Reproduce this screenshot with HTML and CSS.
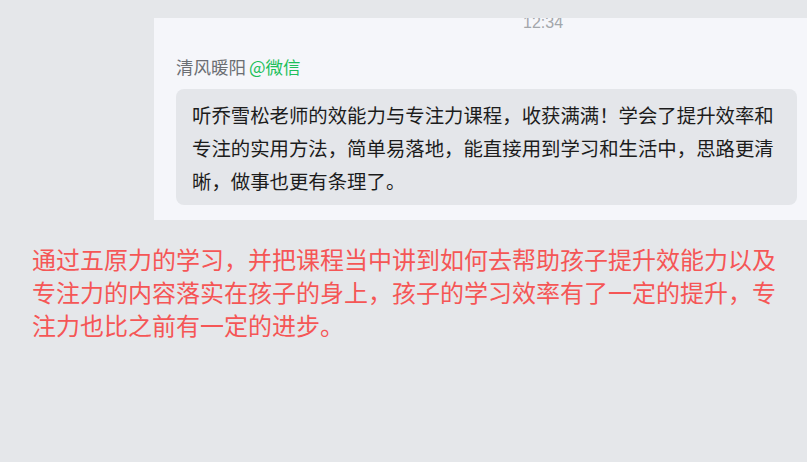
FILE: index.html
```html
<!DOCTYPE html>
<html lang="zh-CN">
<head>
<meta charset="utf-8">
<title>评价</title>
<link rel="stylesheet" href="styles.css">
</head>
<body>
<div class="page">
  <div class="card">
    <div class="time">12:34</div>
    <div class="name">清风暖阳<span class="src">@微信</span></div>
    <div class="bubble">听乔雪松老师的效能力与专注力课程，收获满满！学会了提升效率和专注的实用方法，简单易落地，能直接用到学习和生活中，思路更清晰，做事也更有条理了。</div>
  </div>
  <p class="note">通过五原力的学习，并把课程当中讲到如何去帮助孩子提升效能力以及专注力的内容落实在孩子的身上，孩子的学习效率有了一定的提升，专注力也比之前有一定的进步。</p>
</div>
</body>
</html>
```

FILE: styles.css
```css
html, body {
  margin: 0;
  padding: 0;
  background: #e5e7ea;
  overflow: hidden;
}
.page {
  width: 807px;
  height: 462px;
  padding-top: 18px;
  box-sizing: border-box;
  font-family: "Noto Sans CJK SC", "Microsoft YaHei", sans-serif;
}
.card {
  margin-left: 154px;
  width: 653px;
  box-sizing: border-box;
  background: #f5f6fa;
  padding: 0 10px 15px 22px;
  overflow: hidden;
}
.time {
  margin-top: -5px;
  margin-left: 347px;
  font-family: "Liberation Sans", Arial, sans-serif;
  font-size: 16px;
  line-height: 20px;
  color: #a3a6ab;
}
.name {
  margin-top: 22px;
  font-size: 17.5px;
  line-height: 24px;
  color: #6b6e73;
}
.src {
  color: #1dbf5a;
  margin-left: 3px;
}
.bubble {
  margin-top: 10px;
  width: 621px;
  box-sizing: border-box;
  background: #e4e6ea;
  border-radius: 8px;
  padding: 9px 16px 8px 16px;
  font-size: 19.4px;
  line-height: 33px;
  color: #1c1c1c;
}
.note {
  margin: 22px 0 0 32px;
  width: 752px;
  font-size: 24px;
  line-height: 33px;
  color: #f55656;
}
```
